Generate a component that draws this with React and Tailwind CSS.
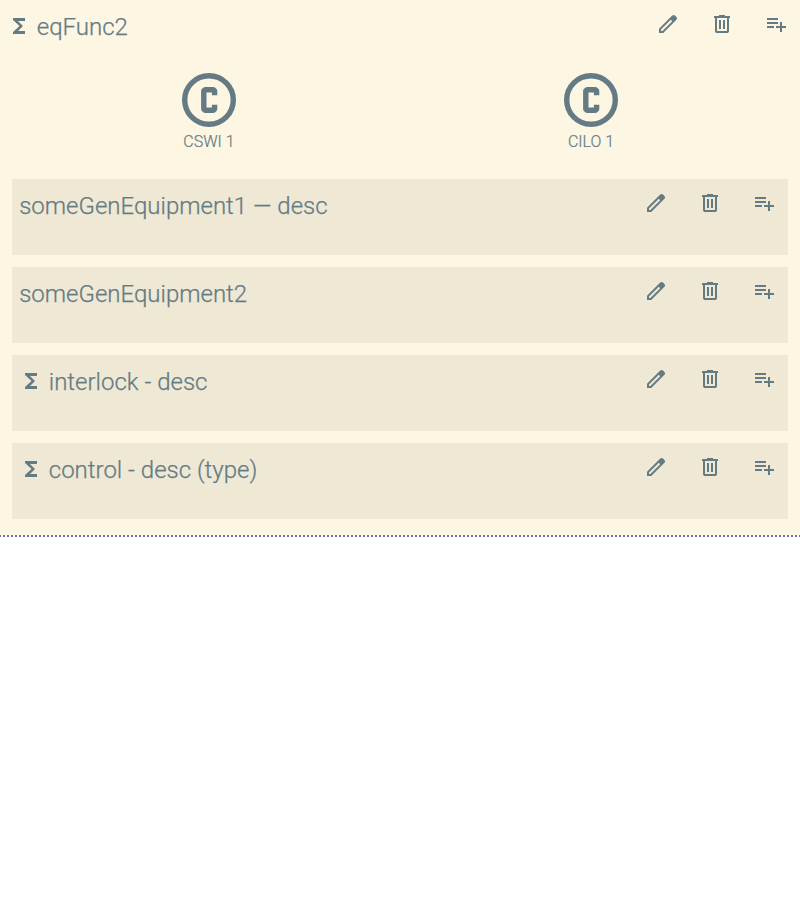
import React from "react";

function SymbolIcon({ d }) {
  return (
    <svg className="block size-6 shrink-0 fill-current" viewBox="0 -960 960 960">
      <path d={d} />
    </svg>
  );
}

const EDIT =
  "M200-200h57l391-391-57-57-391 391v57Zm-80 80v-170l528-527q12-11 26.5-17t30.5-6q16 0 31 6t26 18l55 56q12 11 17.5 26t5.5 30q0 16-5.5 30.5T817-647L290-120H120Zm640-584-56-56 56 56Zm-141 85-28-29 57 57-29-28Z";
const DELETE =
  "M280-120q-33 0-56.5-23.5T200-200v-520h-40v-80h200v-40h240v40h200v80h-40v520q0 33-23.5 56.5T680-120H280Zm400-600H280v520h400v-520ZM360-280h80v-360h-80v360Zm160 0h80v-360h-80v360ZM280-720v520-520Z";
const ADD =
  "M120-320v-80h280v80H120Zm0-160v-80h440v80H120Zm0-160v-80h440v80H120Zm520 480v-160H480v-80h160v-160h80v160h160v80H720v160h-80Z";

function Sigma() {
  return (
    <svg className="mr-[5.6px] mb-0.5 block size-6 shrink-0 fill-current" viewBox="0 0 24 24">
      <path d="M18 4H6v2l6.5 6L6 18v2h12v-3h-7l5-5-5-5h7z" />
    </svg>
  );
}

function Header({ label, sigma }) {
  return (
    <header className="flex h-12 justify-between pl-[7.2px]">
      <h1 className="flex h-[54px] items-center text-2xl font-light whitespace-pre [-webkit-text-stroke:0.25px]">
        {sigma && <Sigma />}
        <span>{label}</span>
      </h1>
      <nav className="flex gap-1.5">
        {[EDIT, DELETE, ADD].map((d) => (
          <button key={d} className="flex size-12 items-center justify-center">
            <SymbolIcon d={d} />
          </button>
        ))}
      </nav>
    </header>
  );
}

function LNode({ label }) {
  return (
    <div className="flex flex-col items-center">
      <svg className="block size-16" viewBox="0 0 64 64" fill="none" stroke="currentColor">
        <circle cx="32" cy="32" r="24.3" strokeWidth="5.4" />
        <path
          d="M37.6 27.3V23L36.3 21.7H28.1L26.8 23V41L28.1 42.3H36.3L37.6 41V36.7"
          strokeWidth="5.4"
          strokeLinejoin="round"
        />
      </svg>
      <span className="-mt-0.5 text-base leading-6 font-light [-webkit-text-stroke:0.2px]">{label}</span>
    </div>
  );
}

function Card({ label, sigma }) {
  return (
    <section className="h-[76px] bg-[#eee8d5]">
      <Header label={label} sigma={sigma} />
    </section>
  );
}

export default function App() {
  return (
    <main className="min-h-[900px] bg-white font-['Roboto',sans-serif] text-[#657b83]">
      <section className="h-[535px] bg-[#fdf6e3]">
        <Header label="eqFunc2" sigma />
        <div className="grid grid-cols-2 gap-3 px-6 pt-5">
          <LNode label="CSWI 1" />
          <LNode label="CILO 1" />
        </div>
        <div className="mt-[25px] flex flex-col gap-3 px-3">
          <Card label="someGenEquipment1 — desc" />
          <Card label="someGenEquipment2" />
          <Card label="interlock - desc" sigma />
          <Card label="control - desc (type)" sigma />
        </div>
      </section>
      <div className="h-0.5 bg-[repeating-linear-gradient(90deg,#6c71c4_0_1px,transparent_1px_3px,#6c71c4_3px_4px)]" />
    </main>
  );
}
